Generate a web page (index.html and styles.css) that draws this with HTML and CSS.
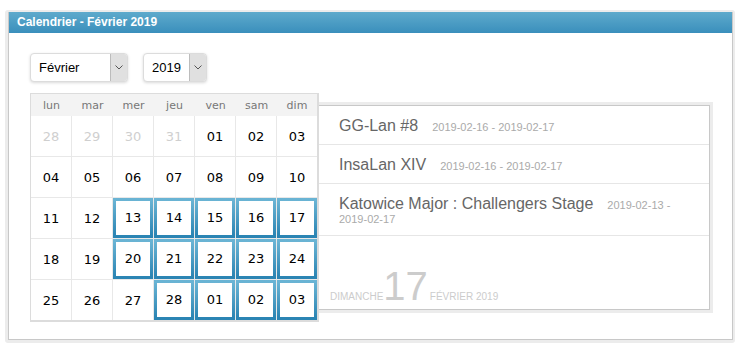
FILE: index.html
```html
<!DOCTYPE html>
<html lang="fr">

<head>
    <meta charset="UTF-8">
    <title>Calendrier</title>
    <link rel="stylesheet" href="styles.css">
</head>

<body>

    <div class="panel">
        <div class="panel-body">
            <div class="panel-title">Calendrier - Février 2019</div>
            <div class="panel-content">

                <div class="selects">
                    <div class="select select-month">
                        <span class="select-value">Février</span>
                        <span class="select-arrow">
                            <svg width="8" height="5" viewBox="0 0 8 5"><polyline points="0.5,0.5 4,4 7.5,0.5" fill="none" stroke="#555" stroke-width="1"/></svg>
                        </span>
                    </div>
                    <div class="select select-year">
                        <span class="select-value">2019</span>
                        <span class="select-arrow">
                            <svg width="8" height="5" viewBox="0 0 8 5"><polyline points="0.5,0.5 4,4 7.5,0.5" fill="none" stroke="#555" stroke-width="1"/></svg>
                        </span>
                    </div>
                </div>

                <div class="cal-row">
                    <div class="calendar">
                        <table>
                            <thead>
                                <tr>
                                    <th>lun</th><th>mar</th><th>mer</th><th>jeu</th><th>ven</th><th>sam</th><th>dim</th>
                                </tr>
                            </thead>
                            <tbody>
                                <tr>
                                    <td class="other">28</td><td class="other">29</td><td class="other">30</td><td class="other">31</td>
                                    <td>01</td><td>02</td><td>03</td>
                                </tr>
                                <tr>
                                    <td>04</td><td>05</td><td>06</td><td>07</td><td>08</td><td>09</td><td>10</td>
                                </tr>
                                <tr>
                                    <td>11</td><td>12</td>
                                    <td class="event"><div>13</div></td><td class="event"><div>14</div></td>
                                    <td class="event"><div>15</div></td><td class="event"><div>16</div></td>
                                    <td class="event"><div>17</div></td>
                                </tr>
                                <tr>
                                    <td>18</td><td>19</td>
                                    <td class="event"><div>20</div></td><td class="event"><div>21</div></td>
                                    <td class="event"><div>22</div></td><td class="event"><div>23</div></td>
                                    <td class="event"><div>24</div></td>
                                </tr>
                                <tr>
                                    <td>25</td><td>26</td><td>27</td>
                                    <td class="event"><div>28</div></td><td class="event"><div>01</div></td>
                                    <td class="event"><div>02</div></td><td class="event"><div>03</div></td>
                                </tr>
                            </tbody>
                        </table>
                    </div>

                    <div class="events">
                        <div class="event-item"><span class="event-name">GG-Lan #8</span><span class="event-date">2019-02-16 - 2019-02-17</span></div>
                        <div class="event-item"><span class="event-name">InsaLan XIV</span><span class="event-date">2019-02-16 - 2019-02-17</span></div>
                        <div class="event-item"><span class="event-name">Katowice Major : Challengers Stage</span><span class="event-date">2019-02-13 - 2019-02-17</span></div>

                        <div class="today">
                            <span class="today-day">DIMANCHE</span><span class="today-num">17</span><span class="today-month">FÉVRIER 2019</span>
                        </div>
                    </div>
                </div>

            </div>
        </div>
    </div>

</body>

</html>
```

FILE: styles.css
```css
body {
    margin: 0;
    background: #fff;
    font-family: 'Liberation Sans', Arial, sans-serif;
}

.panel {
    margin: 10px 8px 0 5px;
    padding: 2px 2px 3px 3px;
    background: #ececec;
    border-radius: 3px;
}

.panel-body {
    background: #fff;
    border: 1px solid #c8c8c8;
    border-top: none;
}

.panel-title {
    height: 21px;
    line-height: 21px;
    padding-left: 8px;
    color: #fff;
    font-size: 12px;
    font-weight: bold;
    background: linear-gradient(#5eaacc, #3a8fbc);
}

.panel-content {
    padding: 20px 0 17px 21px;
}

/* faux selects */
.selects {
    display: flex;
    gap: 15px;
}

.select {
    display: flex;
    height: 29px;
    box-sizing: border-box;
    border: 1px solid #dcdcdc;
    border-radius: 4px;
    box-shadow: 0 1px 3px rgba(0, 0, 0, 0.15);
    background: #fff;
    font-size: 13px;
    color: #000;
}

.select-month {
    width: 98px;
}

.select-year {
    width: 64px;
}

.select-value {
    flex: 1;
    line-height: 27px;
    padding-left: 8px;
}

.select-arrow {
    width: 16px;
    display: flex;
    align-items: center;
    justify-content: center;
    background: #e0e0e0;
    border-left: 1px solid #bcbcbc;
    border-radius: 0 3px 3px 0;
}

/* calendrier */
.cal-row {
    display: flex;
    align-items: flex-start;
    margin-top: 11px;
}

.calendar {
    position: relative;
    z-index: 1;
    background: #fff;
    border: 1px solid #dcdcdc;
    border-right-width: 2px;
    border-bottom-width: 2px;
}

.calendar table {
    border-collapse: separate;
    border-spacing: 0;
    font-family: 'DejaVu Sans', Verdana, sans-serif;
}

.calendar th {
    height: 22px;
    padding: 0;
    background: #f3f3f3;
    color: #777;
    font-size: 11px;
    font-weight: normal;
}

.calendar td {
    width: 40px;
    height: 40px;
    padding: 0;
    text-align: center;
    font-size: 13px;
    color: #000;
    border-right: 1px solid #e8e8e8;
    border-bottom: 1px solid #e8e8e8;
}

.calendar td:last-child {
    border-right: none;
}

.calendar tr:last-child td {
    border-bottom: none;
}

.calendar td.other {
    color: #cfcfcf;
}

.calendar td.event div {
    height: 40px;
    line-height: 34px;
    box-sizing: border-box;
    border: 3px solid #3a96c0;
    border-image: linear-gradient(#6ab4d4, #2a84b3) 1;
}

/* evenements */
.events {
    display: flex;
    flex-direction: column;
    width: 392px;
    height: 205px;
    box-sizing: border-box;
    margin: 12px 0 0 -1px;
    border: 1px solid #c8c8c8;
    box-shadow: 0 0 0 3px #ececec;
    background: #fff;
}

.event-item {
    padding: 11px 20px 9px;
    border-bottom: 1px solid #e6e6e6;
    font-size: 11px;
    line-height: 13px;
}

.event-name {
    font-size: 16px;
    line-height: 18px;
    color: #666;
}

.event-date {
    margin-left: 14px;
    color: #aaa;
}

.today {
    margin-top: auto;
    padding: 0 0 3px 11px;
    font-size: 10px;
    color: #ccc;
    line-height: 12px;
}

.today-num {
    font-size: 40px;
    line-height: 40px;
    margin-right: 2px;
}
```
